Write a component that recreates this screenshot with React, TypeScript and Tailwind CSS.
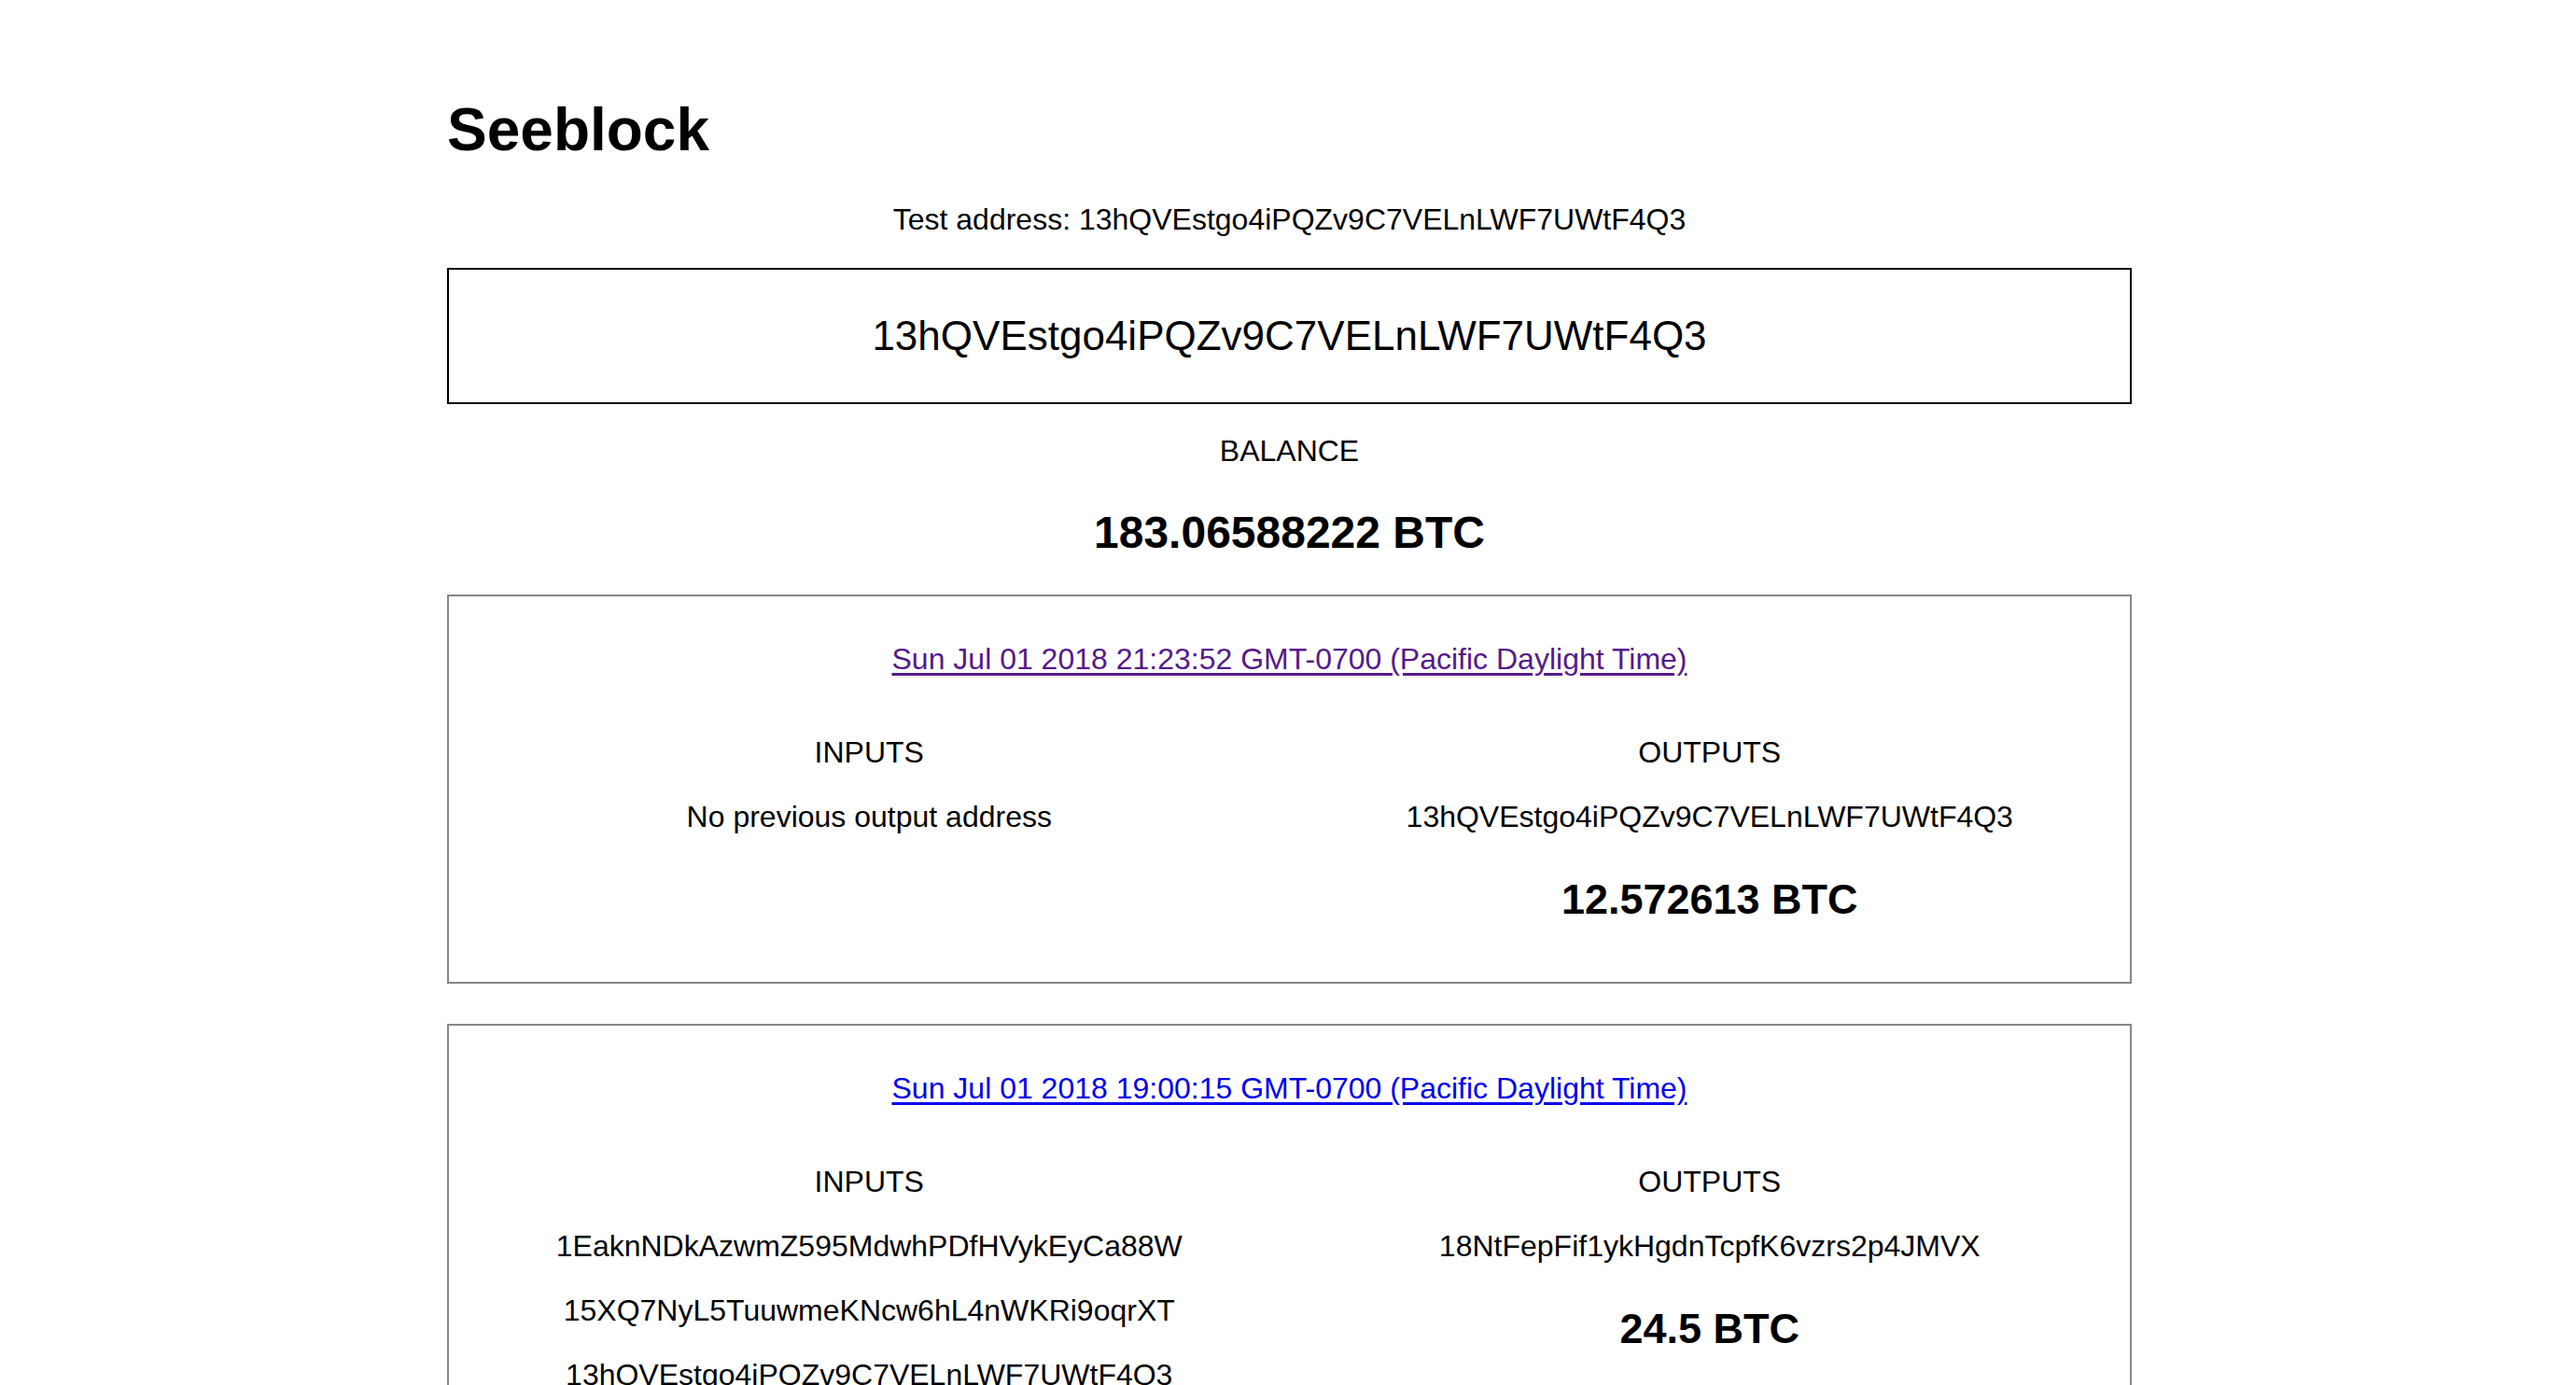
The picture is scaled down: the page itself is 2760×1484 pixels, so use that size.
import React from "react";

// --- DADOS ---
interface Tx {
  id: number;
  date: string;
  visited: boolean;
  inputs: string[];
  outputs: string[];
  amount: string;
}

const ADDRESS = "13hQVEstgo4iPQZv9C7VELnLWF7UWtF4Q3";

const TXS: Tx[] = [
  {
    id: 1,
    date: "Sun Jul 01 2018 21:23:52 GMT-0700 (Pacific Daylight Time)",
    visited: true,
    inputs: ["No previous output address"],
    outputs: [ADDRESS],
    amount: "12.572613 BTC",
  },
  {
    id: 2,
    date: "Sun Jul 01 2018 19:00:15 GMT-0700 (Pacific Daylight Time)",
    visited: false,
    inputs: [
      "1EaknNDkAzwmZ595MdwhPDfHVykEyCa88W",
      "15XQ7NyL5TuuwmeKNcw6hL4nWKRi9oqrXT",
      ADDRESS,
    ],
    outputs: ["18NtFepFif1ykHgdnTcpfK6vzrs2p4JMVX"],
    amount: "24.5 BTC",
  },
];

const TxCard: React.FC<{ tx: Tx }> = ({ tx }) => (
  <div className="border-2 border-[#868686] pt-[49px] pb-[62px] mb-[43px]">
    <div className="text-center leading-[37px]">
      <a
        href="#"
        className={
          tx.visited
            ? "text-[#551a8b] underline underline-offset-[4px]"
            : "text-[#0000ee] underline underline-offset-[4px]"
        }
      >
        {tx.date}
      </a>
    </div>

    <div className="grid grid-cols-2 mt-[63px]">
      {/* inputs */}
      <div className="flex flex-col items-center gap-[32px] leading-[37px]">
        <div>INPUTS</div>
        {tx.inputs.map((a) => (
          <div key={a}>{a}</div>
        ))}
      </div>
      {/* outputs */}
      <div className="flex flex-col items-center leading-[37px]">
        <div>OUTPUTS</div>
        {tx.outputs.map((a) => (
          <div key={a} className="mt-[32px]">
            {a}
          </div>
        ))}
        <div className="mt-[44px] text-[45px] leading-[52px] font-bold">{tx.amount}</div>
      </div>
    </div>
  </div>
);

const App: React.FC = () => {
  return (
    <div
      className="w-full min-h-screen bg-white text-black text-[32px] pl-[3px]"
      style={{ fontFamily: '"Liberation Sans", Arial, Helvetica, sans-serif' }}
    >
      <div className="w-[1805px] mx-auto pt-[102px]">
        <h1 className="text-[64px] leading-[74px] font-bold">Seeblock</h1>

        <p className="text-center leading-[37px] mt-[41px]">Test address: {ADDRESS}</p>

        <div className="mt-[33px] h-[146px] border-2 border-black flex items-center justify-center text-[44px]">
          {ADDRESS}
        </div>

        <div className="text-center leading-[37px] mt-[32px]">BALANCE</div>
        <div className="text-center text-[48px] leading-[55px] font-bold mt-[41px]">
          183.06588222 BTC
        </div>

        <div className="mt-[39px]">
          {TXS.map((tx) => (
            <TxCard key={tx.id} tx={tx} />
          ))}
        </div>
      </div>
    </div>
  );
};

export default App;
